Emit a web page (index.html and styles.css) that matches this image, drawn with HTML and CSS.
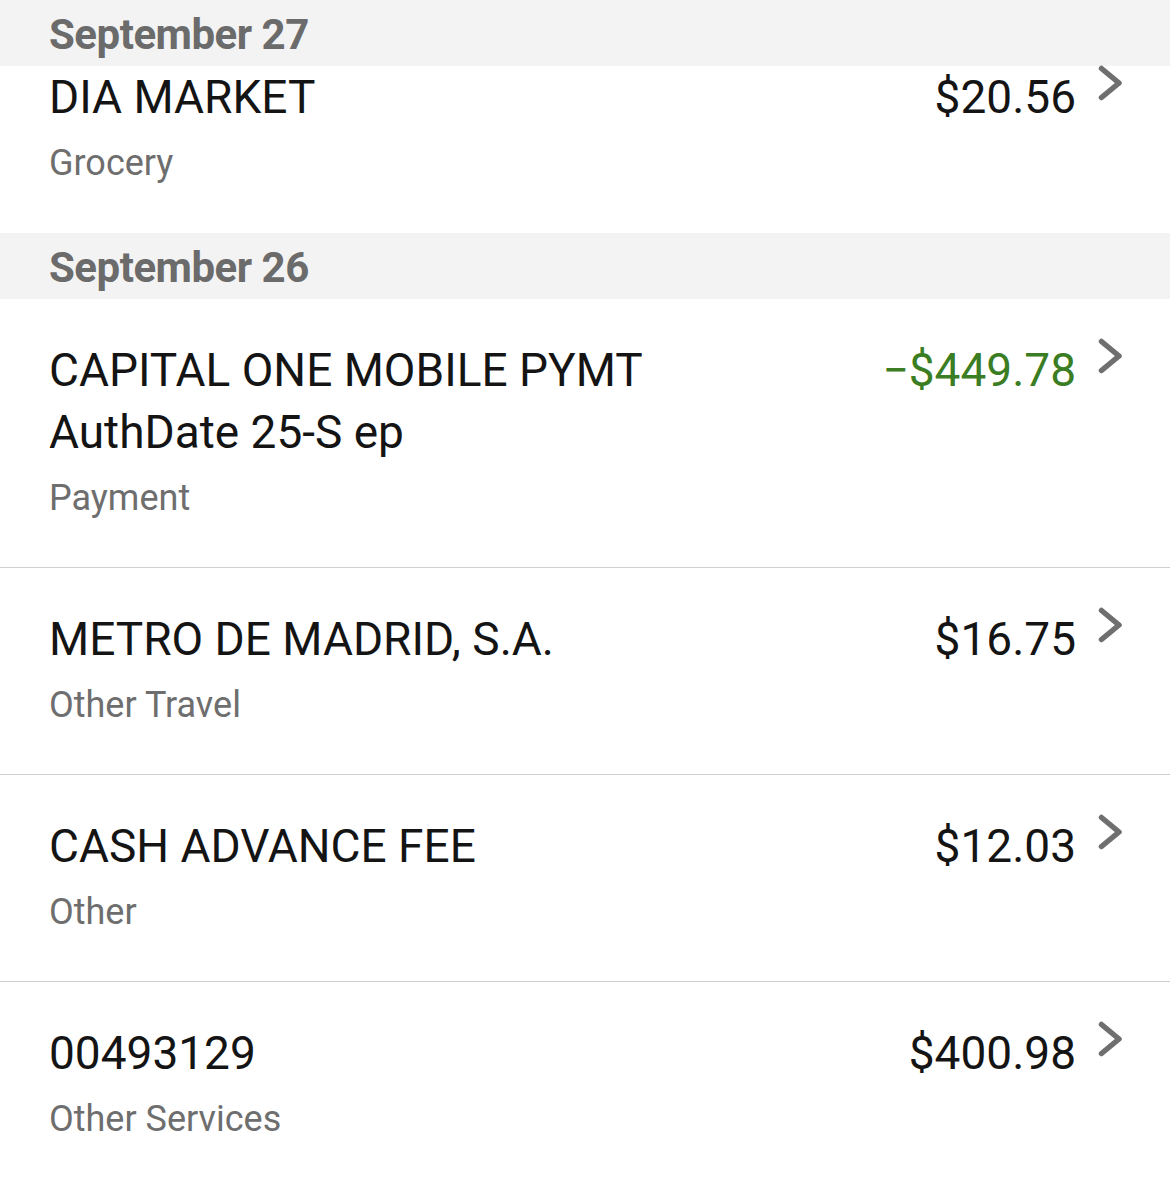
FILE: index.html
```html
<!DOCTYPE html>
<html>
<head>
<meta charset="utf-8">
<link rel="stylesheet" href="styles.css">
</head>
<body>
<div class="list">
  <div class="day">September 27</div>
  <div class="txn first">
    <div class="info">
      <div class="title">DIA MARKET</div>
      <div class="cat">Grocery</div>
    </div>
    <div class="amount">$20.56</div>
    <svg class="chev" viewBox="0 0 26 36" width="26" height="36"><path d="M3.5 3.5 L21 18 L3.5 32.5" /></svg>
  </div>
  <div class="day">September 26</div>
  <div class="txn">
    <div class="info">
      <div class="title">CAPITAL ONE MOBILE PYMT<br>AuthDate 25-S ep</div>
      <div class="cat">Payment</div>
    </div>
    <div class="amount credit">−$449.78</div>
    <svg class="chev" viewBox="0 0 26 36" width="26" height="36"><path d="M3.5 3.5 L21 18 L3.5 32.5" /></svg>
  </div>
  <div class="txn">
    <div class="info">
      <div class="title">METRO DE MADRID, S.A.</div>
      <div class="cat">Other Travel</div>
    </div>
    <div class="amount">$16.75</div>
    <svg class="chev" viewBox="0 0 26 36" width="26" height="36"><path d="M3.5 3.5 L21 18 L3.5 32.5" /></svg>
  </div>
  <div class="txn">
    <div class="info">
      <div class="title">CASH ADVANCE FEE</div>
      <div class="cat">Other</div>
    </div>
    <div class="amount">$12.03</div>
    <svg class="chev" viewBox="0 0 26 36" width="26" height="36"><path d="M3.5 3.5 L21 18 L3.5 32.5" /></svg>
  </div>
  <div class="txn last">
    <div class="info">
      <div class="title">00493129</div>
      <div class="cat">Other Services</div>
    </div>
    <div class="amount">$400.98</div>
    <svg class="chev" viewBox="0 0 26 36" width="26" height="36"><path d="M3.5 3.5 L21 18 L3.5 32.5" /></svg>
  </div>
</div>
</body>
</html>
```
FILE: styles.css
```css
html, body {
  margin: 0;
  padding: 0;
  background: #ffffff;
}
body {
  font-family: Roboto, "Noto Sans", sans-serif;
  width: 1170px;
  height: 1189px;
  overflow: hidden;
}
.list {
  display: flex;
  flex-direction: column;
}
.day {
  height: 66px;
  box-sizing: border-box;
  background: #f3f3f3;
  color: #6b6b6b;
  font-weight: 700;
  font-size: 42px;
  line-height: 63px;
  padding-top: 3px;
  padding-left: 49px;
  letter-spacing: -0.5px;
}
.txn {
  display: flex;
  align-items: flex-start;
  padding: 40px 48px 38px 49px;
  border-bottom: 1px solid #cfcfcf;
}
.txn.first {
  padding-top: 0;
  padding-bottom: 39px;
  border-bottom: none;
}
.txn.last {
  border-bottom: none;
}
.info {
  flex: 1;
  min-width: 0;
}
.title {
  font-size: 46px;
  line-height: 62px;
  color: #141414;
}
.cat {
  font-size: 36px;
  line-height: 62px;
  margin-top: 4px;
  color: #6e6e6e;
}
.amount {
  font-size: 46px;
  line-height: 62px;
  color: #141414;
}
.amount.credit {
  color: #3b7d23;
}
.chev {
  margin-left: 22px;
  margin-right: -2px;
  margin-top: -1px;
  fill: none;
  stroke: #6f6f6f;
  stroke-width: 5.5;
  stroke-linecap: round;
  stroke-linejoin: round;
}
```
